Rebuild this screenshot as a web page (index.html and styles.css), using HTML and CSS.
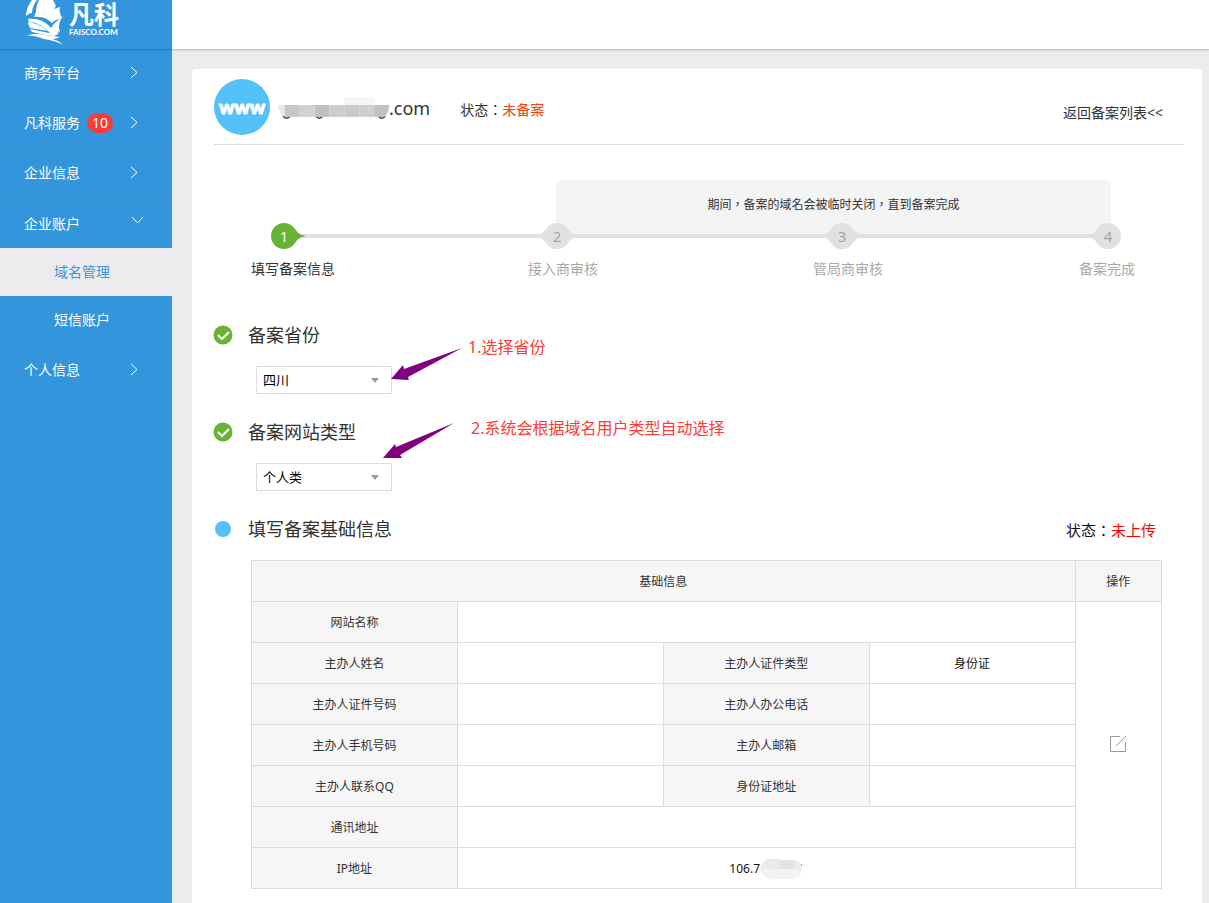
FILE: index.html
```html
<!DOCTYPE html>
<html lang="zh-CN">
<head>
<meta charset="utf-8">
<meta name="viewport" content="width=device-width, initial-scale=1">
<title>域名备案</title>
<link rel="stylesheet" href="styles.css">
</head>
<body>
<header class="topbar">
  <a class="logo" href="#">
    <svg class="logo-ship" viewBox="0 0 40 45" aria-hidden="true">
      <path fill="#fff" d="M7 0C4 4 1 10 1 16c2-2 4-3 6-3 0-5 2-9 5-13z"/>
      <path fill="#fff" d="M14 0c-2 4-3 8-3 12l-2 5c7-1 13 1 18 6 3-3 6-4 10-5-2-4-3-7-2-11l-6 2 2-3-3-6z"/>
      <path fill="#fff" d="M3 19c9-1 17 2 23 9 3-5 7-8 12-12-3 4-4 7-4 12l1 4-5-2-6 2C17 25 10 22 4 22z"/>
      <path fill="#fff" d="M3 22c8 1 14 4 20 9-6-1-12-2-18-3-1-2-2-4-2-6z"/>
      <path fill="#fff" d="M5 29l19 4c2-4 6-5 10-4-1 3-2 4-4 4l4-1c-1 2-2 3-3 3l-2 1c-8-1-15-2-22-4z"/>
      <path fill="#fff" d="M2 36c5-3 12-2 18-1l15 2c-3 1-5 2-8 2 5 1 8 3 11 6-7-4-13-5-19-6-6-2-11-4-17-3z"/>
    </svg>
    <span class="logo-words">
      <strong class="logo-name">凡科</strong>
      <span class="logo-url">FAISCO.COM</span>
    </span>
  </a>
</header>
<div class="layout">
  <nav class="sidebar">
    <ul class="menu">
      <li><a class="menu-link" href="#">商务平台<svg class="chevron" viewBox="0 0 8 13"><path d="M1 1l6 5.500-6 5.500"/></svg></a></li>
      <li><a class="menu-link" href="#">凡科服务<span class="badge">10</span><svg class="chevron" viewBox="0 0 8 13"><path d="M1 1l6 5.500-6 5.500"/></svg></a></li>
      <li><a class="menu-link" href="#">企业信息<svg class="chevron" viewBox="0 0 8 13"><path d="M1 1l6 5.500-6 5.500"/></svg></a></li>
      <li class="open"><a class="menu-link" href="#">企业账户<svg class="chevron chevron-down" viewBox="0 0 13 8"><path d="M1 1l5.500 6 5.500-6"/></svg></a>
        <ul class="submenu">
          <li><a class="submenu-link current" href="#">域名管理</a></li>
          <li><a class="submenu-link" href="#">短信账户</a></li>
        </ul>
      </li>
      <li><a class="menu-link" href="#">个人信息<svg class="chevron" viewBox="0 0 8 13"><path d="M1 1l6 5.500-6 5.500"/></svg></a></li>
    </ul>
  </nav>
  <main class="card">
    <div class="domain">
      <span class="domain-icon">www</span>
      <h1 class="domain-name">
        <svg class="name-mask" viewBox="0 0 112 24" aria-hidden="true">
          <path fill="#f6f6f6" d="M67 1h15v8H67zM82 1h15v8H82z"/>
          <g fill="none" stroke="#444" stroke-width="1.500"><path d="M5 20c2 3 6 3 7 0M38 20c2 3 6 3 7 0M101 20c2 3 6 3 7 0"/></g>
          <path fill="#e8e8e8" d="M0 9h7v12c-4-2-6-6-7-12z"/>
          <path fill="#c6c6c6" d="M7 9h15v12H7z"/><path fill="#d0d1d0" d="M22 9h15v12H22z"/>
          <path fill="#c2bfc0" d="M37 9h15v12H37z"/><path fill="#cccdcc" d="M52 9h15v12H52z"/>
          <path fill="#c5cacf" d="M67 9h15v12H67z"/><path fill="#d0cfcb" d="M82 9h15v12H82z"/>
          <path fill="#bfc2c5" d="M97 9h15c0 6-2 10-5 12H97z"/>
        </svg>.com</h1>
      <p class="domain-status">状态：<span class="warn">未备案</span></p>
      <a class="back" href="#">返回备案列表&lt;&lt;</a>
    </div>

    <section class="progress">
      <p class="notice">期间，备案的域名会被临时关闭，直到备案完成</p>
      <ol class="steps">
        <li class="step active">
          <div class="track"><span class="lead"></span>
            <svg class="marker" viewBox="0 0 36 26" width="36" height="26"><path class="tail" d="M13 11h23v4H13z"/><path class="dot" d="M13 0c5 0 9 3 11 6 3 4 5 6 11 7-6 1-8 3-11 7-2 3-6 6-11 6a13 13 0 0 1 0-26z"/><text x="13" y="19">1</text></svg>
            <span class="line"></span></div>
          <span class="step-label">填写备案信息</span>
        </li>
        <li class="step">
          <div class="track"><span class="lead"></span>
            <svg class="marker" viewBox="0 0 36 26" width="36" height="26"><path class="dot" d="M18 0c5 0 8 2 11 6 2 3 4 5 7 5v4c-3 0-5 2-7 5-3 4-6 6-11 6s-8-2-11-6c-2-3-4-5-7-5v-4c3 0 5-2 7-5 3-4 6-6 11-6z"/><text x="18" y="19">2</text></svg>
            <span class="line"></span></div>
          <span class="step-label">接入商审核</span>
        </li>
        <li class="step">
          <div class="track"><span class="lead"></span>
            <svg class="marker" viewBox="0 0 36 26" width="36" height="26"><path class="dot" d="M18 0c5 0 8 2 11 6 2 3 4 5 7 5v4c-3 0-5 2-7 5-3 4-6 6-11 6s-8-2-11-6c-2-3-4-5-7-5v-4c3 0 5-2 7-5 3-4 6-6 11-6z"/><text x="18" y="19">3</text></svg>
            <span class="line"></span></div>
          <span class="step-label">管局商审核</span>
        </li>
        <li class="step">
          <div class="track"><span class="lead"></span>
            <svg class="marker" viewBox="0 0 31 26" width="31" height="26"><path class="dot" d="M18 0a13 13 0 0 1 0 26c-5 0-8-2-11-6-2-3-4-5-7-5v-4c3 0 5-2 7-5 3-4 6-6 11-6z"/><text x="18" y="19">4</text></svg></div>
          <span class="step-label">备案完成</span>
        </li>
      </ol>
    </section>

    <section class="block">
      <div class="block-head">
        <svg class="state" viewBox="0 0 20 20"><circle cx="10" cy="10" r="9.500" fill="#69b334"/><path d="M5 10l4 4 7-7" fill="none" stroke="#fff" stroke-width="2.200"/></svg>
        <h2><label for="province">备案省份</label></h2>
      </div>
      <div class="picker">
        <select id="province"><option>四川</option></select>
        <svg class="arrow arrow-province" viewBox="0 0 72 36" width="72" height="36" aria-hidden="true"><path d="M0 31L12 17l1 4L71 0 17 29l1 3z"/></svg>
        <span class="hint hint-province">1.选择省份</span>
      </div>
    </section>

    <section class="block">
      <div class="block-head">
        <svg class="state" viewBox="0 0 20 20"><circle cx="10" cy="10" r="9.500" fill="#69b334"/><path d="M5 10l4 4 7-7" fill="none" stroke="#fff" stroke-width="2.200"/></svg>
        <h2><label for="site-type">备案网站类型</label></h2>
      </div>
      <div class="picker">
        <select id="site-type"><option>个人类</option></select>
        <svg class="arrow arrow-type" viewBox="0 0 72 36" width="72" height="36" aria-hidden="true"><path d="M0 35L12 21l1 3L71 0 17 32l2 3z"/></svg>
        <span class="hint hint-type">2.系统会根据域名用户类型自动选择</span>
      </div>
    </section>

    <section class="block">
      <div class="block-head">
        <svg class="state" viewBox="0 0 20 20"><circle cx="10" cy="10" r="8" fill="#54c1fb"/></svg>
        <h2>填写备案基础信息</h2>
        <p class="upload-status">状态：<span class="missing">未上传</span></p>
      </div>
      <table class="info">
        <colgroup><col class="wide"><col class="wide"><col class="wide"><col class="wide"><col class="narrow"></colgroup>
        <thead><tr><th colspan="4">基础信息</th><th>操作</th></tr></thead>
        <tbody>
          <tr><th>网站名称</th><td colspan="3"></td>
            <td rowspan="7"><button class="edit" type="button" aria-label="编辑"><svg viewBox="0 0 18 18"><path d="M11 1.500H1.500v15h15V7M7 11l10-10"/></svg></button></td></tr>
          <tr><th>主办人姓名</th><td></td><th>主办人证件类型</th><td>身份证</td></tr>
          <tr><th>主办人证件号码</th><td></td><th>主办人办公电话</th><td></td></tr>
          <tr><th>主办人手机号码</th><td></td><th>主办人邮箱</th><td></td></tr>
          <tr><th>主办人联系QQ</th><td></td><th>身份证地址</th><td></td></tr>
          <tr><th>通讯地址</th><td colspan="3"></td></tr>
          <tr><th>IP地址</th><td colspan="3"><span class="ip">106.7<svg class="ip-mask" viewBox="0 0 43 20" aria-hidden="true"><path fill="#eaebec" d="M0 10Q3 0 10 0h10v10z"/><path fill="#e3e3e4" d="M20 1h15v9H20z"/><path fill="#ececed" d="M35 1q6 1 7 9h-7z"/><path fill="#f2f3f3" d="M0 10h42q-2 10-10 10H12Q3 20 0 10z"/><path fill="#54c1fb" d="M41 5h1v2h-1z"/></svg></span></td></tr>
        </tbody>
      </table>
    </section>
  </main>
</div>
</body>
</html>
```
FILE: styles.css
```css
* { box-sizing: border-box; }

body {
  margin: 0;
  min-height: 100vh;
  display: flex;
  flex-direction: column;
  background: #ececee;
  color: #333;
  font: 14px/20px "Noto Sans", "Noto Sans CJK SC", sans-serif;
}

h1, h2, p, ul, ol { margin: 0; padding: 0; font-weight: 400; }
ul, ol { list-style: none; }
a { color: inherit; text-decoration: none; }
svg { display: block; flex: none; }

.topbar {
  position: relative;
  z-index: 1;
  height: 49px;
  background: #fff;
  box-shadow: 0 1px 2px rgba(0, 0, 0, .25);
}

.logo {
  display: flex;
  gap: 4px;
  width: 172px;
  height: 100%;
  padding-left: 25px;
  background: #3396dc;
  color: #fff;
}
.logo-ship { width: 40px; height: 45px; }
.logo-words { display: flex; flex-direction: column; padding-top: 2px; }
.logo-name { font-size: 25px; line-height: 24px; }
.logo-url { padding-top: 1px; font: 700 8px/10px Lato, sans-serif; }

.layout { flex: 1; display: flex; }

.sidebar { flex: none; width: 172px; background: #3396dc; color: #fff; }
.menu-link {
  display: flex;
  align-items: center;
  height: 50px;
  padding: 0 34px 2px 24px;
  border-bottom: 1px solid #3d93d0;
}
.open .menu-link { height: 49px; padding: 0 28px 0 24px; border-bottom: 0; }
.badge {
  width: 26px;
  margin-left: 7px;
  border-radius: 10px;
  background: #fb3b37;
  text-align: center;
}
.chevron {
  width: 8px;
  height: 13px;
  margin-left: auto;
  fill: none;
  stroke: #fff;
}
.chevron-down { width: 13px; height: 8px; margin-bottom: 8px; }
.submenu { padding-bottom: 1px; border-bottom: 1px solid #3d93d0; }
.submenu-link { display: block; padding-left: 54px; line-height: 48px; }
.current { background: #ececee; color: #3f94dc; }

.card {
  flex: 1;
  min-width: 0;
  margin: 20px 7px 0 20px;
  padding: 0 18px 14px 22px;
  border-radius: 4px 4px 0 0;
  background: #fff;
}

.domain {
  display: flex;
  align-items: center;
  height: 76px;
  border-bottom: 1px solid #ddd;
}
.domain-icon {
  width: 56px;
  border-radius: 50%;
  background: #54c1fb;
  color: #fff;
  font: 900 19px/56px Lato, sans-serif;
  -webkit-text-stroke: 1px #fff;
  text-align: center;
}
.domain-name {
  display: flex;
  align-items: center;
  margin: 2px 30px 0 8px;
  font-size: 18px;
  line-height: 24px;
}
.name-mask { width: 111px; height: 24px; }
.domain-status { padding-top: 6px; }
.domain-status, .upload-status, .notice {
  font-family: "Noto Sans", "Noto Sans CJK TC", sans-serif;
  font-feature-settings: "locl" 0;
}
.warn { color: #f04510; }
.back { margin: 12px 21px 0 auto; }

.progress { margin-bottom: 44px; padding-top: 35px; }
.notice {
  height: 56px;
  margin: 0 7.5% -13px 35.25%;
  border-radius: 8px 8px 0 0;
  background: #f4f4f4;
  font-size: 12px;
  line-height: 49px;
  text-align: center;
}
.steps {
  position: relative;
  display: grid;
  grid-template-columns: 277fr 285fr 266fr 105fr;
  padding-left: 37px;
  color: #aaa;
}
.track { display: flex; align-items: center; }
.lead, .line { height: 4px; background: #e1e1e1; }
.lead { width: 11px; }
.line { flex: 1; }
.marker { fill: #e1e1e1; font-size: 15px; }
.marker text { fill: #a5a5a5; text-anchor: middle; }
.step-label { display: block; margin-top: 10px; }
.active { color: #333; }
.active .lead { width: 20px; background: none; }
.active .dot { fill: #69b334; }
.active text { fill: #fff; }

.block { margin-bottom: 26px; }
.block:last-child { margin-bottom: 0; }
.block-head { display: flex; align-items: center; gap: 15px; margin-bottom: 19px; }
.state { width: 20px; height: 20px; margin-left: -1px; }
.block-head h2 { font-size: 18px; line-height: 24px; }

.picker { position: relative; width: 136px; margin-left: 42px; }
.picker::after {
  content: "";
  position: absolute;
  top: 12px;
  right: 13px;
  border: 4px solid transparent;
  border-top: 5px solid #999;
  border-bottom: 0;
  pointer-events: none;
}
.picker select {
  display: block;
  width: 100%;
  height: 28px;
  padding: 0 6px;
  appearance: none;
  border: 1px solid #ddd;
  border-radius: 0;
  background: #fff;
  color: #000;
  font: 13px/20px "Noto Sans", "Noto Sans CJK SC", sans-serif;
}
.arrow { position: absolute; z-index: 1; fill: #800080; }
.arrow-province { left: 135px; top: -18px; }
.arrow-type { left: 127px; top: -40px; }
.hint {
  position: absolute;
  color: #ff3a36;
  font-size: 16px;
  line-height: 24px;
  white-space: nowrap;
}
.hint-province { left: 212px; top: -31px; }
.hint-type { left: 215px; top: -47px; }

.upload-status { margin: 2px 28px 0 auto; color: #111; font-size: 15px; }
.missing { color: #f00; }

.info {
  width: calc(100% - 59px);
  margin-left: 37px;
  border-collapse: collapse;
  table-layout: fixed;
  font-size: 12px;
  line-height: 20px;
  text-align: center;
}
.wide { width: 22.625%; }
.narrow { width: 9.5%; }
.info th, .info td { height: 41px; padding: 2px 0 0; border: 1px solid #ddd; }
.info th { background: #f6f6f6; font-weight: 400; }
.info td { color: #111; }
.ip { display: inline-flex; align-items: center; }
.ip-mask { width: 43px; height: 20px; }
.info td[rowspan] { padding: 0 0 4px; }
.edit { padding: 0; border: 0; background: none; vertical-align: middle; cursor: pointer; }
.edit svg { width: 18px; height: 18px; fill: none; stroke: #999; }
```
